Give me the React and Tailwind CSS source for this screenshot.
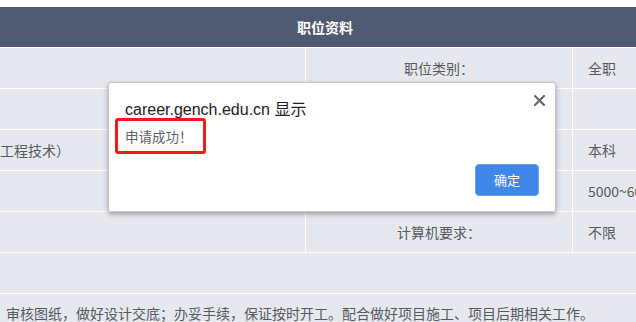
export default function App() {
  const rows = [
    { left: "", mid: "职位类别：", right: "全职" },
    { left: "", mid: "工作地点：", right: "" },
    { left: "工程技术）", mid: "学历要求：", right: "本科" },
    { left: "", mid: "薪资待遇：", right: "5000~6000" },
    { left: "", mid: "计算机要求：", right: "不限" },
  ];

  return (
    <div className="w-[636px] h-[322px] overflow-hidden bg-white relative font-['Noto_Sans_CJK_SC','Noto_Sans',sans-serif] text-[14px] text-[#555a63]">
      <div className="w-[650px] pt-[7px]">
        {/* Header */}
        <div className="h-[40px] bg-[#4f5a72] flex items-center justify-center text-white font-bold text-[14px]">
          职位资料
        </div>

        {/* Info rows */}
        {rows.map((r, i) => (
          <div
            key={i}
            className="h-[41px] flex bg-[#e7e8ed] border-t border-white"
          >
            <div className="w-[305px] flex items-center whitespace-nowrap overflow-hidden">
              {r.left}
            </div>
            <div className="w-[267px] border-l border-white flex items-center justify-center">
              {r.mid}
            </div>
            <div className="flex-1 border-l border-white flex items-center pl-[15px] whitespace-nowrap overflow-hidden">
              {r.right}
            </div>
          </div>
        ))}

        {/* Empty row */}
        <div className="h-[41px] bg-[#e7e8ed] border-t border-white"></div>

        {/* Description */}
        <div className="h-[40px] bg-[#e7e8ed] border-t border-white pl-[6px] pt-[9px] leading-[20px] whitespace-nowrap">
          审核图纸，做好设计交底；办妥手续，保证按时开工。配合做好项目施工、项目后期相关工作。
        </div>
      </div>

      {/* Alert dialog */}
      <div className="absolute left-[108px] top-[82px] w-[448px] h-[130px] bg-white border border-[#c9c9c9] rounded-[3px] shadow-[0_2px_5px_rgba(0,0,0,0.35)] px-[16px] pt-[18px]">
        <button className="absolute right-[10px] top-[11px] w-[12px] h-[12px] flex items-center justify-center">
          <svg width="11" height="11" viewBox="0 0 11 11">
            <path
              d="M1 1 L10 10 M10 1 L1 10"
              stroke="#5f6368"
              strokeWidth="2"
              strokeLinecap="square"
            />
          </svg>
        </button>

        <div className="h-[18px] leading-[18px] text-[16px] text-[#202124] font-['Liberation_Sans','Noto_Sans_CJK_SC',sans-serif]">
          career.gench.edu.cn 显示
        </div>

        <div className="mt-[-1px] -ml-[10px] w-[91px] h-[36px] border-[3px] border-[#f5181b] rounded-[3px] flex items-center pl-[7px] text-[13.5px] text-[#5f6368] whitespace-nowrap">
          申请成功！
        </div>

        <div className="flex justify-end mt-[10px]">
          <button className="w-[64px] h-[32px] rounded-[4px] bg-[#4087ea] border border-[#6aa3f0] text-white text-[13px] flex items-center justify-center">
            确定
          </button>
        </div>
      </div>
    </div>
  );
}
